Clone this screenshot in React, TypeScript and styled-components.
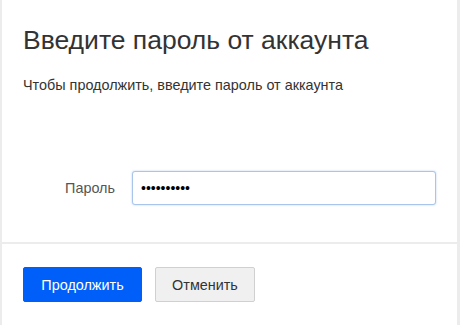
import React, { useState } from "react";
import styled, { createGlobalStyle } from "styled-components";

const GlobalStyle = createGlobalStyle`
  html, body {
    margin: 0;
    padding: 0;
    background: #ffffff;
  }
  body {
    font-family: "Liberation Sans", Arial, sans-serif;
  }
`;

const Frame = styled.div`
  width: 460px;
  height: 325px;
  box-sizing: border-box;
  border-left: 2px solid #ececec;
  border-right: 3px solid #ececec;
  background: #fff;
  display: flex;
  flex-direction: column;
`;

const Body = styled.div`
  padding: 24px 21px 0 21px;
  height: 242px;
  box-sizing: border-box;
  display: flex;
  flex-direction: column;
`;

const Title = styled.h1`
  margin: 0;
  font-size: 26.5px;
  font-weight: normal;
  color: #333;
  line-height: 32px;
`;

const Subtitle = styled.p`
  margin: 21px 0 0;
  font-size: 14.4px;
  color: #333;
  line-height: 17px;
`;

const FieldRow = styled.div`
  margin-top: 77px;
  display: flex;
  align-items: center;
  gap: 17px;
`;

const Label = styled.label`
  width: 92px;
  text-align: right;
  font-size: 14.4px;
  color: #555;
`;

const PasswordInput = styled.input`
  width: 304px;
  height: 34px;
  box-sizing: border-box;
  border: 1px solid #a9c6ea;
  border-radius: 3px;
  box-shadow: 0 0 2px rgba(80, 140, 220, 0.45);
  padding: 0 8px;
  font-size: 14px;
  font-family: "Liberation Sans", Arial, sans-serif;
  color: #000;
  outline: none;
`;

const Divider = styled.hr`
  margin: 0;
  border: none;
  border-top: 2px solid #ececec;
`;

const Footer = styled.div`
  padding: 23px 21px 0;
  display: flex;
  gap: 13px;
`;

const Button = styled.button<{ $primary?: boolean }>`
  height: 35px;
  padding: 0;
  border-radius: 2px;
  font-size: 14.4px;
  font-family: "Liberation Sans", Arial, sans-serif;
  cursor: pointer;
  border: 1px solid ${(p) => (p.$primary ? "#005ff9" : "#d0d0d0")};
  background: ${(p) => (p.$primary ? "#005ff9" : "#f0f0f0")};
  color: ${(p) => (p.$primary ? "#fff" : "#333")};
  width: ${(p) => (p.$primary ? "119px" : "100px")};
`;

export default function App() {
  const [password, setPassword] = useState("••••••••••");
  return (
    <>
      <GlobalStyle />
      <Frame>
        <Body>
          <Title>Введите пароль от аккаунта</Title>
          <Subtitle>Чтобы продолжить, введите пароль от аккаунта</Subtitle>
          <FieldRow>
            <Label htmlFor="pwd">Пароль</Label>
            <PasswordInput
              id="pwd"
              type="text"
              value={password}
              onChange={(e) => setPassword(e.target.value)}
            />
          </FieldRow>
        </Body>
        <Divider />
        <Footer>
          <Button $primary>Продолжить</Button>
          <Button>Отменить</Button>
        </Footer>
      </Frame>
    </>
  );
}
